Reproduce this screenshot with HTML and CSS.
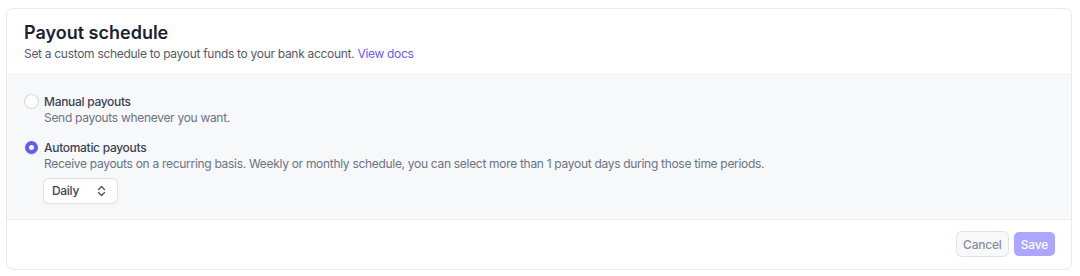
FILE: index.html
```html
<!DOCTYPE html>
<html lang="en">

<head>
    <meta charset="UTF-8">
    <meta name="viewport" content="width=device-width, initial-scale=1.0">
    <title>Payout schedule</title>
    <link rel="stylesheet" href="styles.css">
</head>

<body>
    <div class="page">
        <section class="card">
            <header class="card-head">
                <h2>Payout schedule</h2>
                <p>Set a custom schedule to payout funds to your bank account. <a href="#">View docs</a></p>
            </header>
            <div class="card-body">
                <label class="option">
                    <span class="radio"></span>
                    <span class="text">
                        <span class="title">Manual payouts</span>
                        <span class="desc">Send payouts whenever you want.</span>
                    </span>
                </label>
                <label class="option">
                    <span class="radio checked"></span>
                    <span class="text">
                        <span class="title">Automatic payouts</span>
                        <span class="desc">Receive payouts on a recurring basis. Weekly or monthly schedule, you can select more than 1 payout days during those time periods.</span>
                        <span class="select">
                            Daily
                            <svg width="9" height="12" viewBox="0 0 9 12" fill="none" stroke="#4f566b" stroke-width="1.4" stroke-linecap="round" stroke-linejoin="round">
                                <path d="M1.5 4.5 L4.5 1.5 L7.5 4.5" />
                                <path d="M1.5 7.5 L4.5 10.5 L7.5 7.5" />
                            </svg>
                        </span>
                    </span>
                </label>
            </div>
            <footer class="card-foot">
                <button class="btn">Cancel</button>
                <button class="btn primary" disabled>Save</button>
            </footer>
        </section>
    </div>
</body>

</html>
```

FILE: styles.css
```css
* {
    padding: 0;
    margin: 0;
    box-sizing: border-box;
}

body {
    font-family: Inter, "Noto Sans", sans-serif;
    background-color: #fff;
    color: #3c4257;
}

.page {
    padding: 8px 8px 6px 6px;
}

.card {
    border: 1px solid #e6e9ee;
    border-radius: 7px;
    overflow: hidden;
    background-color: #fff;
}

.card-head {
    padding: 12px 17px 11px 17px;
}

.card-head h2 {
    font-size: 18px;
    line-height: 24px;
    font-weight: 600;
    color: #1a1f36;
}

.card-head p {
    font-size: 12px;
    line-height: 18px;
    letter-spacing: -0.3px;
    color: #545969;
}

.card-head a {
    color: #635bff;
    text-decoration: none;
}

.card-body {
    background-color: #f6f8fa;
    border-top: 1px solid #eceff3;
    border-bottom: 1px solid #eceff3;
    padding: 19px 17px 16px;
    display: flex;
    flex-direction: column;
    gap: 14px;
}

.option {
    display: flex;
    align-items: flex-start;
    gap: 6px;
}

.radio {
    flex: 0 0 auto;
    width: 13px;
    height: 13px;
    margin: 1px 0 0 1px;
    border-radius: 50%;
    background-color: #fff;
    box-shadow: 0 0 0 1px #d5d9e0, 0 1px 1px rgba(0, 0, 0, 0.08);
}

.radio.checked {
    background-color: #fff;
    border: 4px solid #625afa;
    box-shadow: 0 1px 1px rgba(0, 0, 0, 0.1);
}

.text {
    display: flex;
    flex-direction: column;
    align-items: flex-start;
    font-size: 12px;
    line-height: 16px;
    letter-spacing: -0.3px;
}

.title {
    font-weight: 500;
    color: #3c4257;
}

.desc {
    color: #6b7385;
}

.select {
    margin-top: 7px;
    width: 73px;
    height: 24px;
    padding: 0 11px 0 8px;
    display: flex;
    align-items: center;
    justify-content: space-between;
    font-weight: 500;
    color: #3c4257;
    background-color: #fff;
    border-radius: 5px;
    box-shadow: 0 0 0 1px #e0e3e9, 0 1px 2px rgba(0, 0, 0, 0.1);
}

.card-foot {
    padding: 12px 16px 13px;
    display: flex;
    justify-content: flex-end;
    gap: 6px;
}

.btn {
    height: 24px;
    padding: 0 6px;
    font-family: Inter, "Noto Sans", sans-serif;
    font-size: 12px;
    letter-spacing: -0.2px;
    font-weight: 500;
    color: #8a8f9c;
    background-color: #f7f8fa;
    border: none;
    border-radius: 5px;
    box-shadow: 0 0 0 1px #dfe2e8, 0 1px 1px rgba(0, 0, 0, 0.06);
}

.btn.primary {
    color: #fff;
    background-color: #aca6ff;
    box-shadow: none;
    padding: 0 7px;
}
```
